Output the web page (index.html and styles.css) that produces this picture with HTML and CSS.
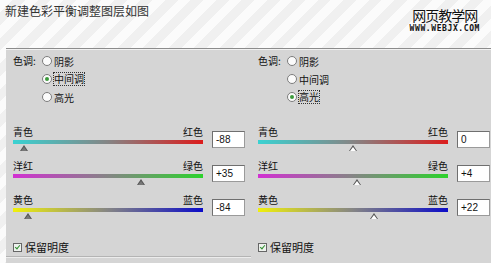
FILE: index.html
```html
<!DOCTYPE html>
<html lang="zh-CN">
<head>
    <meta charset="UTF-8">
    <title>新建色彩平衡调整图层</title>
    <link rel="stylesheet" href="styles.css">
</head>
<body>
    <div class="header">
        <h1 class="title">新建色彩平衡调整图层如图</h1>
        <div class="logo">
            <div class="logo-cn">网页教学网</div>
            <div class="logo-url">WWW.WEBJX.COM</div>
        </div>
    </div>

    <div class="panel">
        <!-- 中间调 -->
        <div class="col col-left">
            <div class="tone">
                <span class="tone-label">色调:</span>
                <div class="tone-options">
                    <div class="opt"><span class="radio"></span><span>阴影</span></div>
                    <div class="opt"><span class="radio on"></span><span class="focus">中间调</span></div>
                    <div class="opt"><span class="radio"></span><span>高光</span></div>
                </div>
            </div>

            <div class="slider">
                <div class="track">
                    <div class="names"><span>青色</span><span>红色</span></div>
                    <div class="bar cyan-red"><span class="thumb dark" style="left: 6%"></span></div>
                </div>
                <div class="value">-88</div>
            </div>
            <div class="slider">
                <div class="track">
                    <div class="names"><span>洋红</span><span>绿色</span></div>
                    <div class="bar magenta-green"><span class="thumb dark" style="left: 67.5%"></span></div>
                </div>
                <div class="value">+35</div>
            </div>
            <div class="slider">
                <div class="track">
                    <div class="names"><span>黄色</span><span>蓝色</span></div>
                    <div class="bar yellow-blue"><span class="thumb dark" style="left: 8%"></span></div>
                </div>
                <div class="value">-84</div>
            </div>

            <div class="keep"><span class="check"></span>保留明度</div>
            <div class="sep"></div>
        </div>

        <!-- 高光 -->
        <div class="col">
            <div class="tone">
                <span class="tone-label">色调:</span>
                <div class="tone-options">
                    <div class="opt"><span class="radio"></span><span>阴影</span></div>
                    <div class="opt"><span class="radio"></span><span>中间调</span></div>
                    <div class="opt"><span class="radio on"></span><span class="focus">高光</span></div>
                </div>
            </div>

            <div class="slider">
                <div class="track">
                    <div class="names"><span>青色</span><span>红色</span></div>
                    <div class="bar cyan-red"><span class="thumb" style="left: 50%"></span></div>
                </div>
                <div class="value">0</div>
            </div>
            <div class="slider">
                <div class="track">
                    <div class="names"><span>洋红</span><span>绿色</span></div>
                    <div class="bar magenta-green"><span class="thumb" style="left: 52%"></span></div>
                </div>
                <div class="value">+4</div>
            </div>
            <div class="slider">
                <div class="track">
                    <div class="names"><span>黄色</span><span>蓝色</span></div>
                    <div class="bar yellow-blue"><span class="thumb" style="left: 61%"></span></div>
                </div>
                <div class="value">+22</div>
            </div>

            <div class="keep"><span class="check"></span>保留明度</div>
        </div>
    </div>
</body>
</html>
```

FILE: styles.css
```css
html, body {
    margin: 0;
    height: 100%;
    overflow: hidden;
}

body {
    font-family: "Noto Sans CJK SC", sans-serif;
    color: #111;
    background: repeating-linear-gradient(135deg, #fbfbfb 0 9px, #f0f0f0 9px 18px);
}

.header {
    height: 48px;
    display: flex;
    justify-content: space-between;
}

.title {
    margin: 0;
    padding: 4px 5px;
    font-size: 12px;
    line-height: 14px;
    font-weight: normal;
    color: #333;
}

.logo {
    margin-right: 11px;
    padding-top: 8px;
    text-align: center;
}

.logo-cn {
    font-size: 14px;
    line-height: 14px;
    height: 15px;
    color: #111;
    letter-spacing: -1px;
    text-shadow: 0 0 2px #fff;
}

.logo-url {
    margin-top: 2px;
    font-family: "DejaVu Sans Mono", monospace;
    font-size: 8px;
    font-weight: bold;
    line-height: 8px;
    letter-spacing: 0.6px;
    color: #111;
}

.panel {
    margin-left: 6px;
    height: 215px;
    background-color: #d5d5d5;
    border-top: 1px solid #8c8c8c;
    box-shadow: inset 0 1px #f2f2f2;
    display: grid;
    grid-template-columns: 245px 245px;
    font-size: 10px;
}

.col {
    padding: 3px 0 0 7px;
}

.tone {
    display: flex;
    height: 54px;
}

.tone-label {
    width: 29px;
    line-height: 18px;
}

.opt {
    display: flex;
    align-items: center;
    height: 18px;
}

.radio {
    width: 10px;
    height: 10px;
    box-sizing: border-box;
    border: 1px solid #7c7c7c;
    border-radius: 50%;
    background: #fbfbfb;
    margin-right: 2px;
    position: relative;
}

.radio.on::after {
    content: "";
    position: absolute;
    left: 2px;
    top: 2px;
    width: 4px;
    height: 4px;
    border-radius: 50%;
    background-color: #3b9a3b;
}

.focus {
    outline: 1px dotted #333;
    line-height: 12px;
}

.slider {
    display: flex;
    margin-top: 8px;
}

.tone + .slider {
    margin-top: 19px;
}

.track {
    width: 190px;
    padding-bottom: 7px;
}

.names {
    display: flex;
    justify-content: space-between;
    height: 14px;
    line-height: 14px;
}

.bar {
    position: relative;
    height: 4px;
    margin-top: 1px;
}

.cyan-red {
    background: linear-gradient(to right, #3ad2d2, #858585 50%, #dc1c1c);
}

.magenta-green {
    background: linear-gradient(to right, #d230d2, #858585 50%, #2cd22c);
}

.yellow-blue {
    background: linear-gradient(to right, #f0f00c, #858585 50%, #0c0cc8);
}

/* little triangle under the bar */
.thumb {
    position: absolute;
    top: 5px;
    width: 0;
    height: 0;
    margin-left: -4px;
    border-left: 4px solid transparent;
    border-right: 4px solid transparent;
    border-bottom: 6px solid #555;
}

.thumb::after {
    content: "";
    position: absolute;
    left: -3px;
    top: 1.5px;
    border-left: 3px solid transparent;
    border-right: 3px solid transparent;
    border-bottom: 4px solid #fff;
}

.thumb.dark::after {
    border-bottom-color: #777;
}

.value {
    margin: 6px 0 0 9px;
    width: 33px;
    height: 17px;
    box-sizing: border-box;
    background-color: #fff;
    border: 1px solid #9a9a9a;
    border-top-color: #6f6f6f;
    border-left-color: #6f6f6f;
    padding-left: 3px;
    font-family: "Liberation Sans", Arial, sans-serif;
    font-size: 10px;
    line-height: 15px;
    color: #111;
}

.keep {
    display: flex;
    align-items: center;
    margin-top: 21px;
    height: 14px;
    font-size: 11px;
}

.check {
    width: 9px;
    height: 9px;
    box-sizing: border-box;
    border: 1px solid #666;
    background-color: #eef2ee;
    margin-right: 3px;
    position: relative;
}

.check::after {
    content: "";
    position: absolute;
    left: 2px;
    top: 0;
    width: 2px;
    height: 4px;
    border-right: 1.5px solid #2f8f2f;
    border-bottom: 1.5px solid #2f8f2f;
    transform: rotate(40deg);
}

.sep {
    margin: 2px 0 0 -7px;
    height: 1px;
    background-color: #b4b4b4;
    border-bottom: 1px solid #ececec;
}
```
